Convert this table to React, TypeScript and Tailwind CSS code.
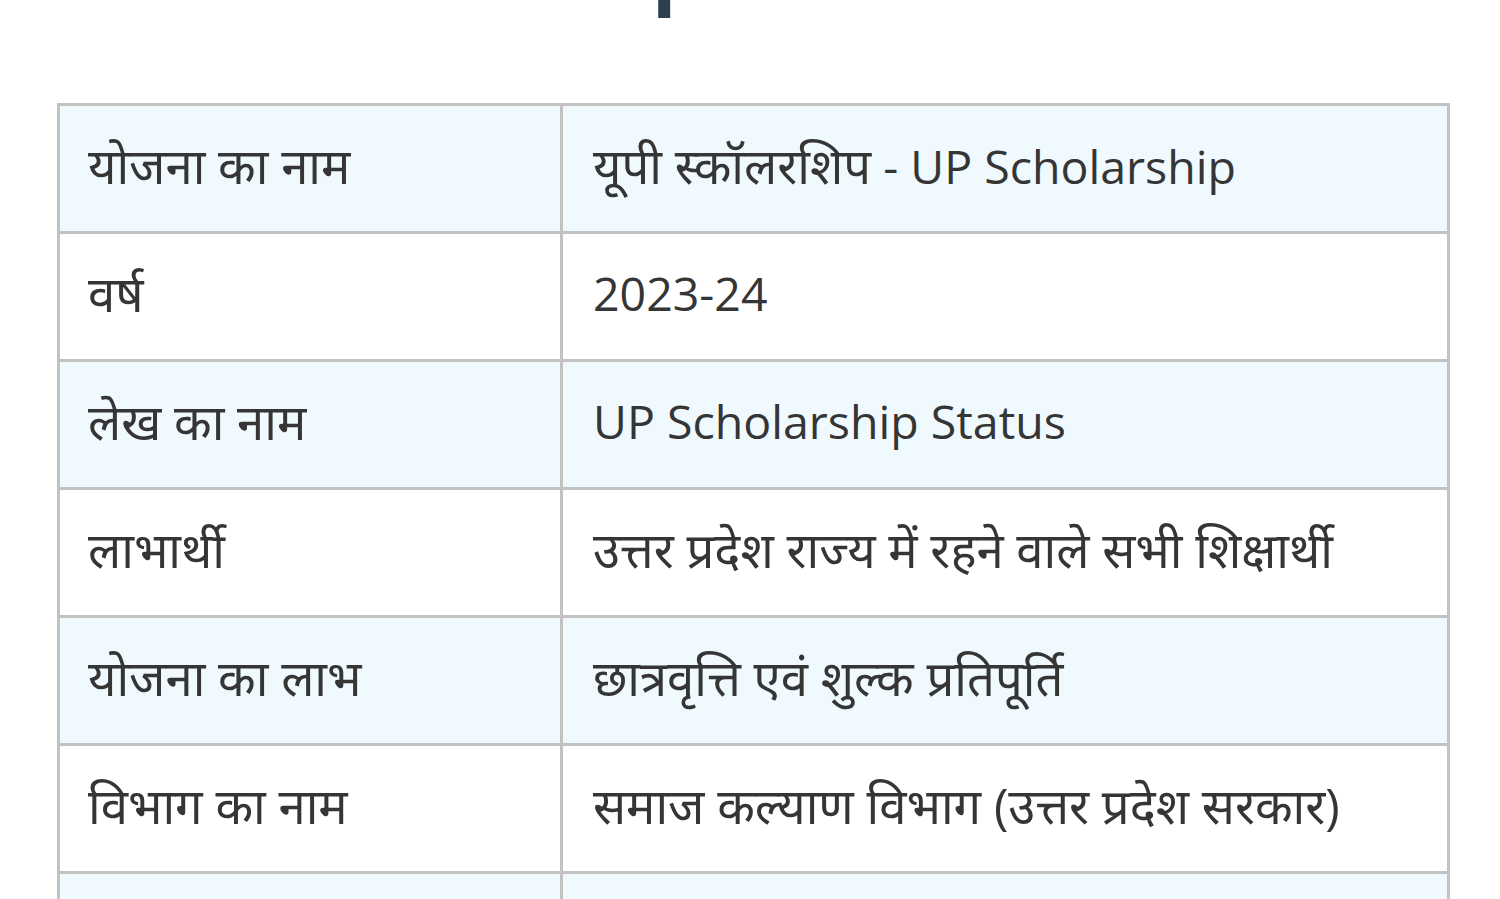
import React from "react";

type Cell = { hi?: string; en?: string };

const rows: [Cell, Cell][] = [
  [{ hi: "योजना का नाम" }, { hi: "यूपी स्कॉलरशिप", en: " - UP Scholarship" }],
  [{ hi: "वर्ष" }, { en: "2023-24" }],
  [{ hi: "लेख का नाम" }, { en: "UP Scholarship Status" }],
  [{ hi: "लाभार्थी" }, { hi: "उत्तर प्रदेश राज्य में रहने वाले सभी शिक्षार्थी" }],
  [{ hi: "योजना का लाभ" }, { hi: "छात्रवृत्ति एवं शुल्क प्रतिपूर्ति" }],
  [{ hi: "विभाग का नाम" }, { hi: "समाज कल्याण विभाग (उत्तर प्रदेश सरकार)" }],
  [{ hi: "आवेदन का तरीका" }, { hi: "ऑनलाइन" }],
];

function CellText({ c }: { c: Cell }) {
  return (
    <span className="whitespace-nowrap">
      {c.hi && <span className="text-[49px] leading-none">{c.hi}</span>}
      {c.en && <span className="text-[46.5px] leading-none">{c.en}</span>}
    </span>
  );
}

export default function App() {
  return (
    <div
      className="w-[1500px] h-[899px] overflow-hidden bg-white text-[#353535]"
      style={{ fontFamily: '"Open Sans", "Noto Sans Devanagari", "Noto Sans", sans-serif' }}
    >
      <div className="h-[20px] overflow-hidden flex justify-center pr-[94px]">
        <h2 className="mt-[-72px] text-[80px] leading-none font-bold text-[#2c3e50] whitespace-nowrap">
          UP Scholarship Status 2023-24
        </h2>
      </div>
      <div className="pl-[57px] pt-[83px]">
        <table className="w-[1393px] border-collapse table-fixed">
          <colgroup>
            <col className="w-[503px]" />
            <col />
          </colgroup>
          <tbody>
            {rows.map(([a, b], i) => (
              <tr key={i} className={i % 2 === 0 ? "bg-[#eff9fe]" : "bg-white"}>
                <td className="h-[128px] border-[3px] border-[#c2c2c2] pl-[28px] pr-4 pb-[6px] align-middle leading-none">
                  <CellText c={a} />
                </td>
                <td className="h-[128px] border-[3px] border-[#c2c2c2] pl-[30px] pr-4 pb-[6px] align-middle leading-none">
                  <CellText c={b} />
                </td>
              </tr>
            ))}
          </tbody>
        </table>
      </div>
    </div>
  );
}
